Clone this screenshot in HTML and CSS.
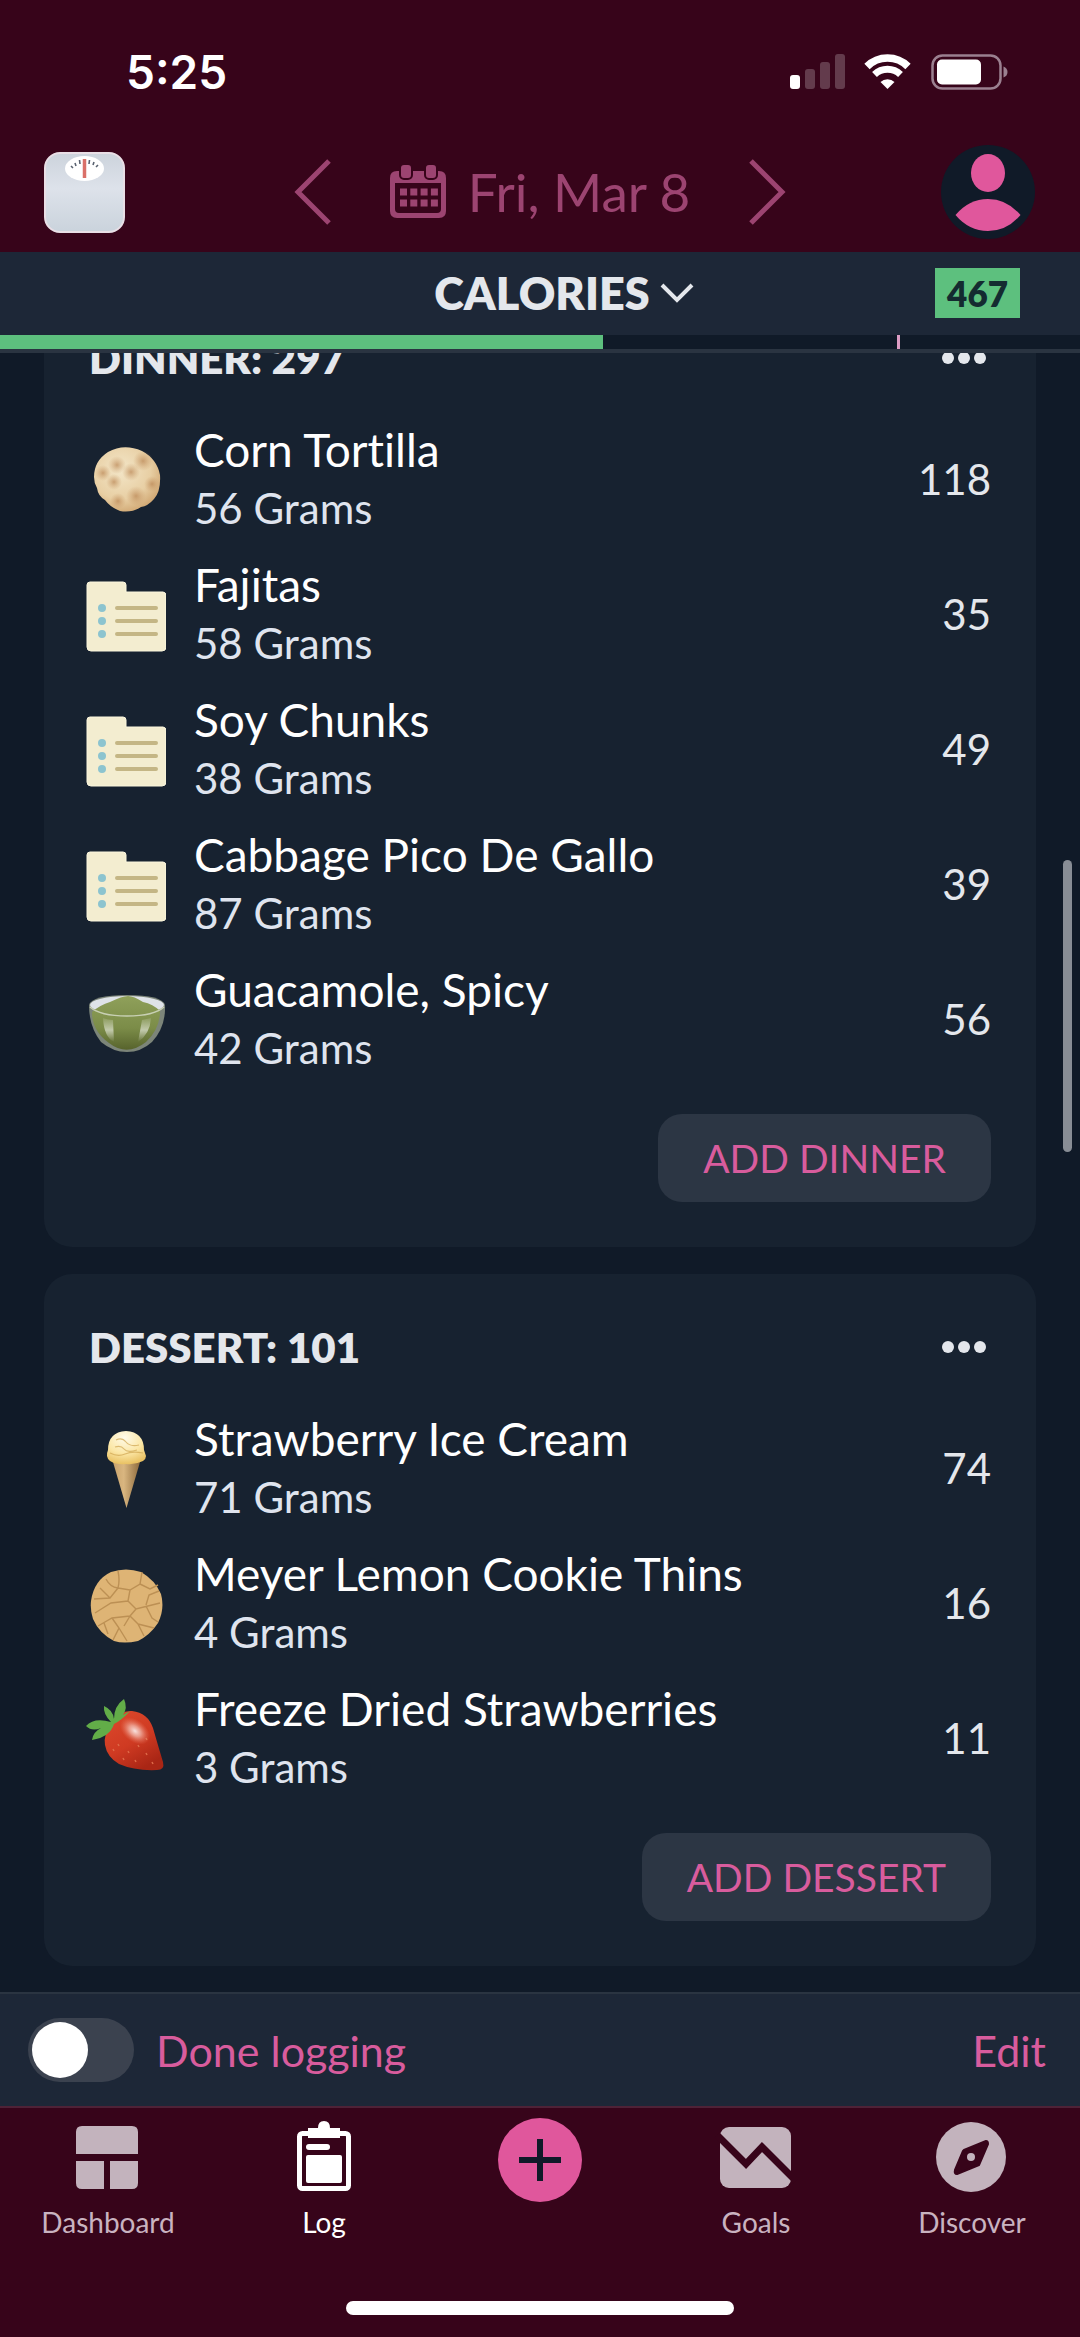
FILE: index.html
```html
<!DOCTYPE html>
<html lang="en">
<head>
<meta charset="utf-8">
<meta name="viewport" content="width=device-width, initial-scale=1">
<title>Food Log</title>
<link rel="stylesheet" href="styles.css">
</head>
<body>
<svg class="defs" aria-hidden="true">
  <defs>
    <linearGradient id="scale-body" x1="0" y1="0" x2="0" y2="1"><stop offset="0" stop-color="#ccd3dc"/><stop offset=".45" stop-color="#dde2ea"/><stop offset="1" stop-color="#cad3dc"/></linearGradient>
    <radialGradient id="tortilla-base" cx=".4" cy=".35" r=".7"><stop offset="0" stop-color="#f3e6c8"/><stop offset=".65" stop-color="#e8cfa4"/><stop offset="1" stop-color="#cfa570"/></radialGradient>
    <radialGradient id="spot"><stop offset="0" stop-color="#b98553" stop-opacity=".7"/><stop offset="1" stop-color="#c99a68" stop-opacity="0"/></radialGradient>
    <linearGradient id="bowl-green" x1="0" y1="0" x2="0" y2="1"><stop offset="0" stop-color="#8fa05a"/><stop offset=".6" stop-color="#7b8c48"/><stop offset="1" stop-color="#57632c"/></linearGradient>
    <linearGradient id="glare" x1="0" y1="0" x2="0" y2="1"><stop offset="0" stop-color="#fff" stop-opacity=".1"/><stop offset=".5" stop-color="#fff" stop-opacity=".55"/><stop offset="1" stop-color="#fff" stop-opacity="0"/></linearGradient>
    <radialGradient id="scoop" cx=".45" cy=".2" r=".8"><stop offset="0" stop-color="#fffbea"/><stop offset=".6" stop-color="#fbe6a4"/><stop offset="1" stop-color="#e9c163"/></radialGradient>
    <linearGradient id="cone"><stop offset="0" stop-color="#c9a36c"/><stop offset=".4" stop-color="#d9b680"/><stop offset="1" stop-color="#8d6a3d"/></linearGradient>
    <linearGradient id="berry" x1="0" y1="0" x2=".6" y2="1"><stop offset="0" stop-color="#dd4a2c"/><stop offset=".6" stop-color="#cf3a22"/><stop offset="1" stop-color="#a92615"/></linearGradient>
    <radialGradient id="shine"><stop offset="0" stop-color="#fff" stop-opacity=".85"/><stop offset=".4" stop-color="#fbd9cf" stop-opacity=".6"/><stop offset="1" stop-color="#f08a70" stop-opacity="0"/></radialGradient>
    <symbol id="recipe" viewBox="0 0 80 80">
      <path d="M4 8h33q3 0 3 3v7h37q3 0 3 4v51q0 4-4 4H5q-4 0-4-4V11q0-3 3-3z" fill="#f3edd0" stroke="#fbf6dd" stroke-width="1"/>
      <g fill="#8cc4cf"><circle cx="16" cy="34" r="4"/><circle cx="16" cy="47" r="4"/><circle cx="16" cy="60" r="4"/></g>
      <path d="M31 34h39M31 47h39M31 60h39" stroke="#c4b685" stroke-width="4" stroke-linecap="round"/>
    </symbol>
    <symbol id="dots" viewBox="0 0 44 12"><circle cx="6" cy="6" r="6"/><circle cx="22" cy="6" r="6"/><circle cx="38" cy="6" r="6"/></symbol>
  </defs>
</svg>

<header class="top">
  <div class="status">
    <span class="clock">5:25</span>
    <svg class="signals" viewBox="0 0 218 36" width="218" height="36" aria-hidden="true">
      <g fill="#fff"><rect x="0" y="21" width="10" height="14" rx="3"/><g opacity=".22"><rect x="15" y="15" width="10" height="20" rx="3"/><rect x="30" y="8" width="10" height="27" rx="3"/><rect x="45" y="0" width="10" height="35" rx="3"/></g></g>
      <g fill="none" stroke="#fff"><path d="M77 12.500a29 29 0 0 1 41 0" stroke-width="7.500"/><path d="M84.500 20.500a19 19 0 0 1 26 0" stroke-width="7"/></g>
      <path d="M90.500 28a10 10 0 0 1 14 0l-7 7z" fill="#fff"/>
      <rect x="142.500" y="1.500" width="68" height="33" rx="10" fill="none" stroke="#9b8090" stroke-width="2.500"/>
      <rect x="147" y="5.500" width="44" height="25" rx="5" fill="#fff"/>
      <path d="M213.500 12.500q4 1.500 4 5.500t-4 5.500z" fill="#9b8090"/>
    </svg>
  </div>
  <div class="datebar">
    <button class="icon-btn" aria-label="Weigh in">
      <svg width="81" height="81" viewBox="0 0 81 81"><rect x="1" y="1" width="79" height="79" rx="15" fill="url(#scale-body)" stroke="#e9dfe6" stroke-width="2"/><ellipse cx="40.500" cy="16.500" rx="19.500" ry="12.500" fill="#fff"/><path d="M27 14l2 2M31 11l1 3M35.500 8l.5 4M45.500 8l-.5 4M50 10l-1 3M54 13l-2 2" stroke="#596270" stroke-width="1.600"/><path d="M40.500 7v19" stroke="#da7069" stroke-width="3.500"/></svg>
    </button>
    <div class="dates">
      <button class="icon-btn" aria-label="Previous day"><svg width="38" height="68" viewBox="0 0 38 68"><path d="M35 3L4 34l31 31" fill="none" stroke="#9c4471" stroke-width="5"/></svg></button>
      <button class="date">
        <svg width="56" height="54" viewBox="0 0 56 54" aria-hidden="true"><path fill-rule="evenodd" d="M7 6h42q7 0 7 7v33q0 7-7 7H7q-7 0-7-7V13q0-7 7-7zM5 18v26q0 4 4 4h38q4 0 4-4V18z" fill="#9c4471"/><g fill="#9c4471" stroke="#37041a" stroke-width="2"><rect x="10" y="-1" width="12" height="15" rx="4"/><rect x="35" y="-1" width="12" height="15" rx="4"/></g><path d="M10 27h38M10 38h38" stroke="#9c4471" stroke-width="7" stroke-dasharray="7 3.300"/></svg>
        <span>Fri, Mar 8</span>
      </button>
      <button class="icon-btn" aria-label="Next day"><svg width="38" height="68" viewBox="0 0 38 68"><path d="M3 3l31 31L3 65" fill="none" stroke="#9c4471" stroke-width="5"/></svg></button>
    </div>
    <button class="icon-btn" aria-label="Profile">
      <svg width="96" height="96" viewBox="0 0 96 96"><circle cx="48" cy="48" r="47" fill="#101a28"/><ellipse cx="48" cy="29" rx="17" ry="19" fill="#e0579c"/><path d="M15.500 71Q29 55 48 55t32.500 16Q67 87 48 87T15.500 71z" fill="#e0579c"/></svg>
    </button>
  </div>
</header>

<section class="summary" aria-label="Calories budget">
  <div class="summary-row">
    <button class="metric">CALORIES <svg width="34" height="20" viewBox="0 0 34 20" aria-hidden="true"><path d="M2 2l15 15L32 2" fill="none" stroke="#e4e7ec" stroke-width="4"/></svg></button>
    <output class="left">467</output>
  </div>
  <div class="track"><div class="fill" style="width:55.8%"></div><div class="mark" style="left:83.1%"></div></div>
</section>

<main class="log">
  <div class="meals">
    <section class="meal">
      <header class="meal-head"><h2>DINNER: 297</h2><button class="icon-btn" aria-label="Dinner options"><svg class="dots" width="44" height="12"><use href="#dots"/></svg></button></header>
      <ul class="foods">
        <li>
          <svg class="pic" viewBox="0 0 80 80" aria-hidden="true"><path d="M8 38Q8 22 22 13 38 4 56 12 71 20 74 36 75 52 68 60 62 67 55 68 46 74 34 72 24 68 19 61 12 57 11 49 8 44 8 38z" fill="url(#tortilla-base)"/><g fill="url(#spot)"><circle cx="17" cy="34" r="8"/><circle cx="31" cy="26" r="9"/><circle cx="45" cy="33" r="9"/><circle cx="28" cy="43" r="8"/><circle cx="57" cy="22" r="10"/><circle cx="50" cy="57" r="10"/><circle cx="32" cy="62" r="8"/><circle cx="66" cy="45" r="8"/></g></svg>
          <div class="food"><span class="name">Corn Tortilla</span><span class="qty">56 Grams</span></div><span class="cal">118</span>
        </li>
        <li><svg class="pic" aria-hidden="true"><use href="#recipe"/></svg><div class="food"><span class="name">Fajitas</span><span class="qty">58 Grams</span></div><span class="cal">35</span></li>
        <li><svg class="pic" aria-hidden="true"><use href="#recipe"/></svg><div class="food"><span class="name">Soy Chunks</span><span class="qty">38 Grams</span></div><span class="cal">49</span></li>
        <li><svg class="pic" aria-hidden="true"><use href="#recipe"/></svg><div class="food"><span class="name">Cabbage Pico De Gallo</span><span class="qty">87 Grams</span></div><span class="cal">39</span></li>
        <li>
          <svg class="pic" viewBox="0 0 80 80" aria-hidden="true"><path d="M3 26Q6 16 41 16t38 10Q80 48 66 63 55 73 41 73T15 63Q3 48 3 26z" fill="#7c8579"/><ellipse cx="41" cy="26" rx="37" ry="9" fill="#dfe3e8"/><path d="M6 33Q14 26 24 23q12-6 18-6t15 6q10 2 17 9 0 18-14 31-19 15-37 1Q6 52 6 33z" fill="url(#bowl-green)"/><path d="M4 28q10 9 37 9t37-9" fill="none" stroke="#c8d0b4" stroke-width="1.500"/><path d="M17 39q5 2 10 2l1 22Q18 58 17 39zM56 41l9-2q-1 16-13 24z" fill="url(#glare)"/></svg>
          <div class="food"><span class="name">Guacamole, Spicy</span><span class="qty">42 Grams</span></div><span class="cal">56</span>
        </li>
      </ul>
      <footer class="meal-foot"><button class="add">ADD DINNER</button></footer>
    </section>

    <section class="meal">
      <header class="meal-head"><h2>DESSERT: 101</h2><button class="icon-btn" aria-label="Dessert options"><svg class="dots" width="44" height="12"><use href="#dots"/></svg></button></header>
      <ul class="foods">
        <li>
          <svg class="pic" viewBox="0 0 80 80" aria-hidden="true"><path d="M27 34h27L40.500 80z" fill="url(#cone)"/><path d="M22 22Q22 4 40 3q18 1 18 19l2 6q0 3-3 5-8 4-17 3-9 1-16-3-5-4-2-11z" fill="url(#scoop)"/><path d="M30 12q6-3 10 2t13 3M24 25q8 4 15 1t18-1M29 19q6-2 9 2t13 1" fill="none" stroke="#cfa551" stroke-width="1.200" opacity=".7"/></svg>
          <div class="food"><span class="name">Strawberry Ice Cream</span><span class="qty">71 Grams</span></div><span class="cal">74</span>
        </li>
        <li>
          <svg class="pic" viewBox="0 0 80 80" aria-hidden="true"><path d="M5 38Q8 17 25 9q15-5 30 0 14 8 20 22 4 15-3 29-8 12-20 18-14 3-24 0Q13 70 7 56 4 47 5 38z" fill="#deb475"/><path d="M20 16q4 8 12 9l-8 10-16 1M32 25q2-8 0-17M32 25l12 2 10-6 2-12M44 27l-2 11 8 8 24-6M54 21l10 5 8-4M42 38l-17 2-16 10M50 46l-6 7-18 2-14 8M26 55l7 10-6 12M33 65l8 13M44 53l8 8 6 12M52 61l16 4M60 42l3-10 10-4M60 43l6 12 6 4M24 35l-10-10M44 53l-6 10M18 60l4 11" fill="none" stroke="#bc9054" stroke-width="1.400"/></svg>
          <div class="food"><span class="name">Meyer Lemon Cookie Thins</span><span class="qty">4 Grams</span></div><span class="cal">16</span>
        </li>
        <li>
          <svg class="pic" viewBox="0 0 80 80" aria-hidden="true"><path d="M26 26Q34 12 46 13q16 2 21 17 4 14 10 34 2 8-6 8-22 1-38-6-12-7-14-19-2-10 7-21z" fill="url(#berry)"/><path d="M32 46l1 2M42 53l1 2M52 47l1 2M60 55l1 2M49 62l1 2M37 60l1 2M27 51l1 2M60 40l1 2M66 64l1 2" stroke="#de6a48" stroke-width="1.500"/><ellipse cx="49" cy="33" rx="17" ry="11" transform="rotate(38 49 33)" fill="url(#shine)"/><path d="M25 24Q17 16 18 8q9 4 10 13Q28 8 38 1q4 9-1 16l7-4q-8 9-16 13-4 13-22 16 1-8 9-12-9 4-15-2 8-9 25-4z" fill="#62ad48"/></svg>
          <div class="food"><span class="name">Freeze Dried Strawberries</span><span class="qty">3 Grams</span></div><span class="cal">11</span>
        </li>
      </ul>
      <footer class="meal-foot"><button class="add">ADD DESSERT</button></footer>
    </section>
  </div>
  <div class="scrollbar" aria-hidden="true"></div>
</main>

<section class="done-bar">
  <label class="done"><input type="checkbox" class="toggle"><span>Done logging</span></label>
  <button class="edit">Edit</button>
</section>

<footer class="bottom">
  <nav class="tabs" aria-label="Main">
    <a href="#dashboard"><svg viewBox="0 0 84 84" aria-hidden="true"><path d="M16 8h50q6 0 6 6v22H10V14q0-6 6-6zM10 43h28v28H16q-6 0-6-6zM44 43h28v22q0 6-6 6H44z" fill="#c3b3bd"/></svg><span>Dashboard</span></a>
    <a href="#log" class="active"><svg viewBox="0 0 84 84" aria-hidden="true"><rect x="17.500" y="15.500" width="49" height="55" rx="3" fill="none" stroke="#fff" stroke-width="5"/><path d="M26 10h10q0-7 6-7t6 7h10v10H26z" fill="#fff"/><path d="M27 29h18" stroke="#fff" stroke-width="6" stroke-linecap="round"/><rect x="24" y="37" width="36" height="28" rx="2" fill="#fff"/></svg><span>Log</span></a>
    <a href="#add" aria-label="Add"><svg viewBox="0 0 84 84" aria-hidden="true"><circle cx="42" cy="42" r="42" fill="#e0579c"/><path d="M42 21v42M21 42h42" stroke="#101a28" stroke-width="6"/></svg></a>
    <a href="#goals"><svg viewBox="0 0 84 84" aria-hidden="true"><rect x="6" y="9" width="71" height="61" rx="9" fill="#c3b3bd"/><path d="M3 17l29 29 16-17 34 34" fill="none" stroke="#37041a" stroke-width="7"/></svg><span>Goals</span></a>
    <a href="#discover"><svg viewBox="0 0 84 84" aria-hidden="true"><circle cx="41" cy="39" r="35" fill="#c3b3bd"/><path d="M34 32l22-9q2 0 2 3l-9 21-22 9q-3 0-2-4l8-19z" fill="#37041a" stroke="#37041a" stroke-width="2" stroke-linejoin="round"/><circle cx="41" cy="39" r="4" fill="#c3b3bd"/></svg><span>Discover</span></a>
  </nav>
  <div class="home"></div>
</footer>
</body>
</html>
```
FILE: styles.css
```css
* { box-sizing: border-box; }

body {
  margin: 0;
  height: 100vh;
  display: flex;
  flex-direction: column;
  background: #101a28;
  color: #fff;
  font-family: Lato, "Liberation Sans", sans-serif;
  font-size: 46px;
  font-variant-ligatures: none;
}

button {
  padding: 0;
  border: 0;
  background: none;
  color: inherit;
  font: inherit;
  cursor: pointer;
}

svg { display: block; flex: none; }

.defs { position: absolute; width: 0; height: 0; }

/* status bar and date */
.top { background: #37041a; }

.status {
  height: 144px;
  padding: 0 72px 0 126px;
  display: flex;
  align-items: center;
  justify-content: space-between;
}

.clock {
  font: 600 46px/56px Inter, sans-serif;
}

.datebar {
  height: 108px;
  padding: 0 44px 14px;
  display: grid;
  grid-template-columns: 1fr auto 1fr;
  align-items: center;
}

.datebar > :last-child { justify-self: end; }

.dates {
  display: flex;
  align-items: center;
  gap: 58px;
}

.date {
  display: flex;
  align-items: center;
  gap: 22px;
  color: #9c4471;
  font-size: 53px;
  line-height: 64px;
}

/* calories budget */
.summary { background: #1d2737; border-bottom: 4px solid #2a3441; }

.summary-row {
  height: 83px;
  display: grid;
  grid-template-columns: 1fr auto 1fr;
  align-items: center;
  padding: 0 60px 2px 108px;
}

.metric {
  grid-column: 2;
  display: flex;
  align-items: center;
  gap: 10px;
  color: #e4e7ec;
  font-size: 45px;
  font-weight: 800;
}

.left {
  justify-self: end;
  padding: 0 12px;
  background: #5dc07e;
  color: #142b30;
  font-size: 35px;
  font-weight: 800;
  line-height: 50px;
}

.track { position: relative; height: 14px; background: #101a28; }
.fill { height: 14px; background: #5dc07e; }
.mark { position: absolute; top: 0; width: 3px; height: 14px; background: #dc9cc4; }

/* scrolled meal list */
.log {
  position: relative;
  flex: 1;
  min-height: 0;
  overflow: hidden;
}

.meals {
  margin-top: -68px;
  padding: 0 44px;
  display: flex;
  flex-direction: column;
  gap: 27px;
}

.meal { background: #172230; border-radius: 28px; }

.meal-head {
  height: 126px;
  padding: 20px 50px 0 45px;
  display: flex;
  align-items: center;
  justify-content: space-between;
  color: #e4e7ec;
}

.meal-head h2 { margin: 0; font-size: 42px; font-weight: 800; line-height: 52px; }

.dots { fill: #e4e7ec; }

.foods { margin: 0; padding: 0; list-style: none; }

.foods li {
  height: 135px;
  padding: 0 45px 0 42px;
  display: flex;
  align-items: center;
}

.pic { width: 80px; height: 80px; margin-right: 28px; }

.food { flex: 1; display: flex; flex-direction: column; }

.name { line-height: 59px; }

.qty { color: #dfe4ee; font-size: 42px; line-height: 59px; }

.cal { color: #e4e7ec; font-size: 42px; }

.meal-foot { padding: 28px 45px 45px; display: flex; justify-content: flex-end; }

.add {
  height: 88px;
  padding: 0 45px;
  border-radius: 24px;
  background: #2c3644;
  color: #d85c9d;
  font-size: 39px;
}

.scrollbar {
  position: absolute;
  top: 507px;
  right: 8px;
  width: 9px;
  height: 292px;
  border-radius: 5px;
  background: #888d95;
}

/* done logging */
.done-bar {
  height: 114px;
  padding: 0 34px 0 28px;
  display: flex;
  align-items: center;
  justify-content: space-between;
  background: #1d2737;
  border-top: 2px solid #2a3441;
  color: #d85c9d;
  font-size: 43px;
}

.done { display: flex; align-items: center; gap: 22px; }

.toggle {
  appearance: none;
  width: 106px;
  height: 64px;
  margin: 0;
  padding: 4px;
  border-radius: 32px;
  background: #3b424f;
}

.toggle::before {
  content: "";
  display: block;
  width: 56px;
  height: 56px;
  border-radius: 50%;
  background: #fff;
}

.toggle:checked { background: #e0579c; }
.toggle:checked::before { margin-left: auto; }

/* tab bar */
.bottom {
  height: 231px;
  padding: 10px 0 22px;
  display: flex;
  flex-direction: column;
  align-items: center;
  justify-content: space-between;
  background: #37041a;
  border-top: 2px solid #4e2237;
}

.tabs { width: 100%; display: grid; grid-template-columns: repeat(5, 1fr); }

.tabs a {
  display: flex;
  flex-direction: column;
  align-items: center;
  color: #c9b3c0;
  font-size: 28px;
  line-height: 40px;
  text-decoration: none;
}

.tabs svg { width: 84px; height: 84px; }

.tabs .active { color: #fff; }

.home { width: 36%; height: 14px; border-radius: 7px; background: #fff; }
```
